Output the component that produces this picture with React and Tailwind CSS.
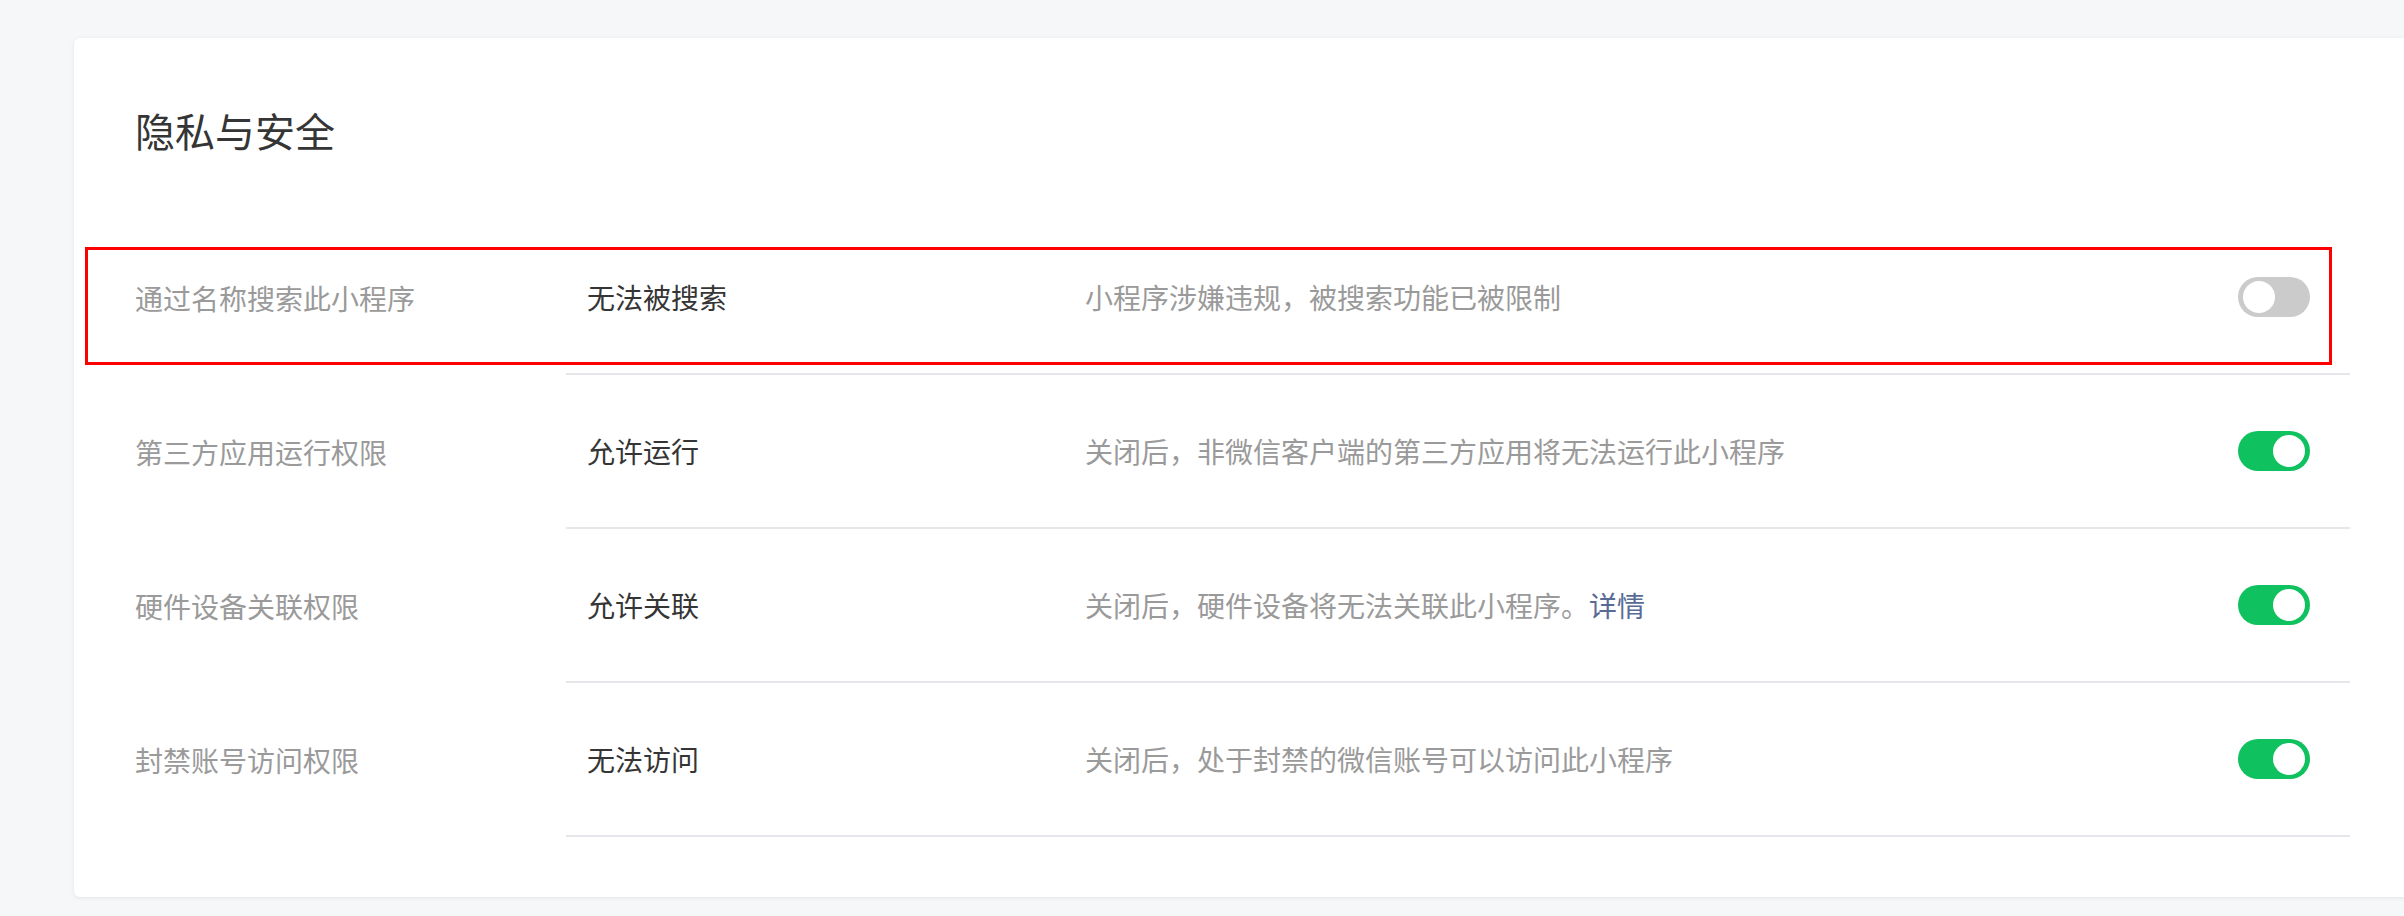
const rows = [
  {
    label: '通过名称搜索此小程序',
    value: '无法被搜索',
    desc: '小程序涉嫌违规，被搜索功能已被限制',
    on: false,
  },
  {
    label: '第三方应用运行权限',
    value: '允许运行',
    desc: '关闭后，非微信客户端的第三方应用将无法运行此小程序',
    on: true,
  },
  {
    label: '硬件设备关联权限',
    value: '允许关联',
    desc: '关闭后，硬件设备将无法关联此小程序。',
    link: '详情',
    on: true,
  },
  {
    label: '封禁账号访问权限',
    value: '无法访问',
    desc: '关闭后，处于封禁的微信账号可以访问此小程序',
    on: true,
  },
];

function Toggle({ on }) {
  return (
    <div
      className={`relative h-[40px] w-[72px] shrink-0 rounded-full ${
        on ? 'bg-[#10c15f]' : 'bg-[#cbcbcb]'
      }`}
    >
      <span
        className={`absolute top-[4px] h-[32px] w-[32px] rounded-full bg-white ${
          on ? 'right-[5px]' : 'left-[5px]'
        }`}
      />
    </div>
  );
}

function Row({ row }) {
  return (
    <div className="flex h-[154px]">
      <div className="flex w-[492px] shrink-0 items-center pl-[61px] text-[28px] text-[#9a9a9a]">
        {row.label}
      </div>
      <div className="mr-[84px] flex flex-1 items-center border-b-2 border-[#e6e6eb] pr-[40px]">
        <div className="w-[519px] shrink-0 pl-[21px] text-[28px] text-[#353535]">{row.value}</div>
        <div className="flex-1 text-[28px] text-[#9a9a9a]">
          {row.desc}
          {row.link && <a className="text-[#576b95]">{row.link}</a>}
        </div>
        <Toggle on={row.on} />
      </div>
    </div>
  );
}

export default function App() {
  return (
    <div
      className="min-h-screen overflow-hidden bg-[#f6f7f9] pl-[74px] pt-[38px]"
      style={{ fontFamily: '"Noto Sans CJK SC", "Noto Sans", sans-serif' }}
    >
      <div className="relative w-[2360px] rounded-md bg-white pb-[60px] shadow-[0_1px_4px_rgba(0,0,0,0.08)]">
        <div className="h-[183px] pl-[61px] pt-[64px]">
          <h2 className="text-[40px] leading-[56px] text-[#353535]">隐私与安全</h2>
        </div>

        {rows.map((row) => (
          <Row key={row.label} row={row} />
        ))}

        {/* annotation box around first row */}
        <div className="pointer-events-none absolute left-[11px] top-[209px] h-[118px] w-[2247px] border-[3px] border-[#ff0000]" />
      </div>
    </div>
  );
}
